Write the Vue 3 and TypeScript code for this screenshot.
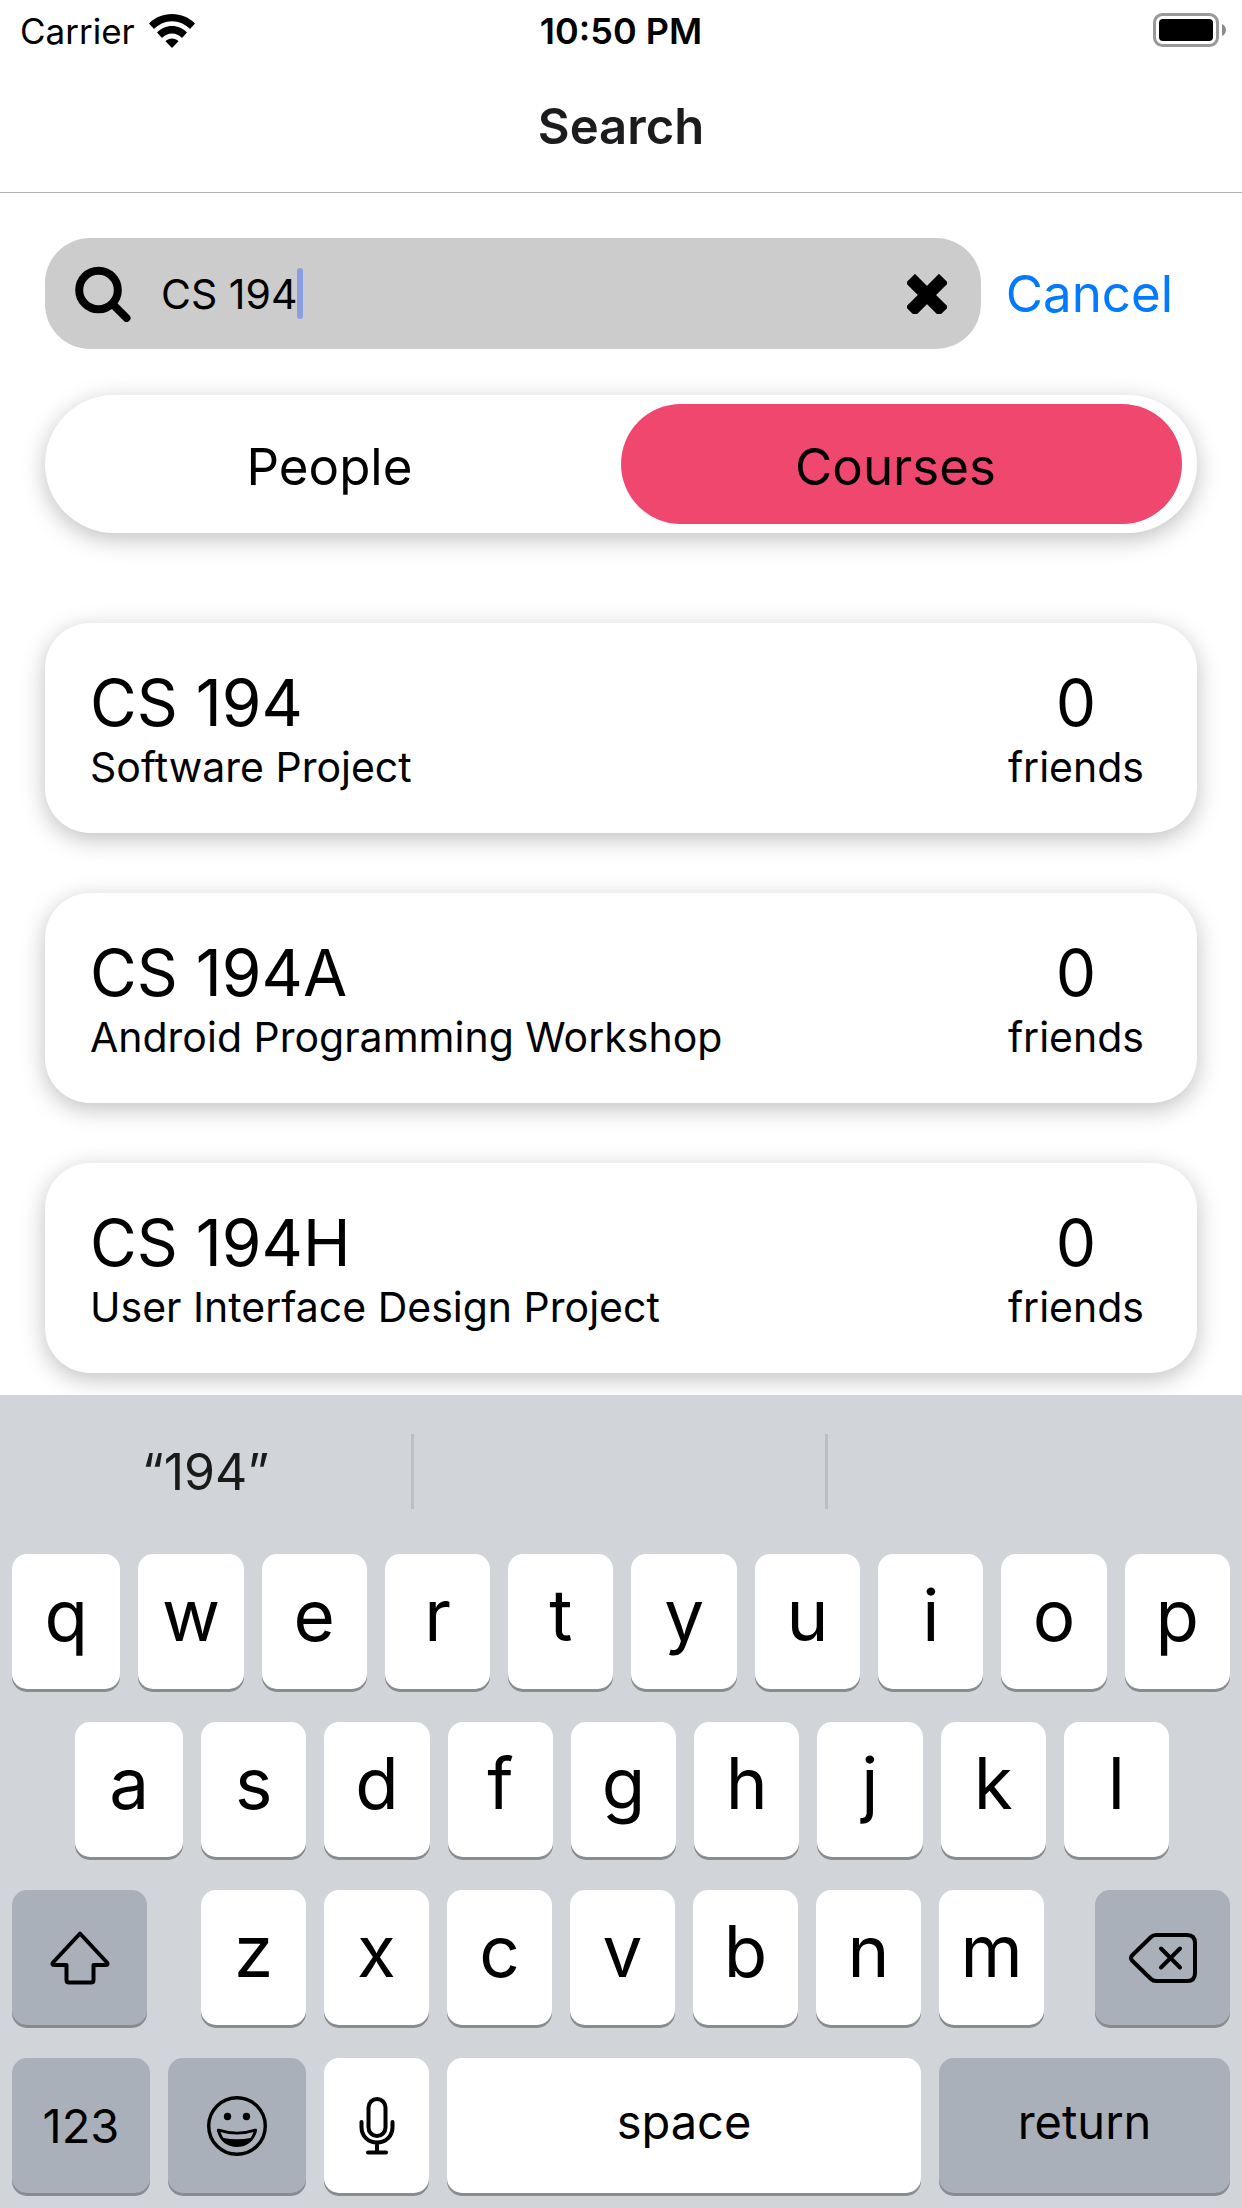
<script setup lang="ts">
import { ref } from 'vue'

interface Course {
  code: string
  name: string
  friends: number
}

const query = ref('CS 194')
const tabs = ['People', 'Courses']
const activeTab = ref('Courses')

const courses: Course[] = [
  { code: 'CS 194', name: 'Software Project', friends: 0 },
  { code: 'CS 194A', name: 'Android Programming Workshop', friends: 0 },
  { code: 'CS 194H', name: 'User Interface Design Project', friends: 0 },
]

const suggestions = ['“194”', '', '']
const topRow = [...'qwertyuiop']
const middleRow = [...'asdfghjkl']
const bottomRow = [...'zxcvbnm']

function type(text: string) {
  query.value += text
}
</script>

<template>
  <div class="screen">
    <div class="status">
      <div class="carrier">
        <span>Carrier</span>
        <svg class="wifi" viewBox="0 0 46 34" aria-hidden="true">
          <path d="M23 0C14 0 6 3.500 0 9.500L5 15C10 10 16 7.200 23 7.200S36 10 41 15L46 9.500C40 3.500 32 0 23 0Z" />
          <path d="M23 12C17 12 12 14.500 8 18.500L13 24C16 21 19 19.500 23 19.500S30 21 33 24L38 18.500C34 14.500 29 12 23 12Z" />
          <path d="M23 24.500C20.500 24.500 18.300 25.500 16.500 27.200L23 34L29.500 27.200C27.700 25.500 25.500 24.500 23 24.500Z" />
        </svg>
      </div>
      <span class="time">10:50 PM</span>
      <svg class="battery" viewBox="0 0 74 34" aria-hidden="true">
        <rect x="1.500" y="1.500" width="63" height="31" rx="8" fill="none" stroke="#999" stroke-width="3" />
        <rect x="6" y="6" width="54" height="22" rx="4" />
        <path d="M69 11C71.500 12 73 14.500 73 17S71.500 22 69 23Z" fill="#8c8c8c" />
      </svg>
    </div>

    <header class="header">
      <h1>Search</h1>
    </header>

    <main class="content">
      <form class="search" @submit.prevent>
        <div class="field">
          <svg class="magnifier" viewBox="0 0 56 56" aria-hidden="true">
            <circle cx="23.500" cy="24" r="19.300" />
            <path d="M38 38.500L51.500 52" />
          </svg>
          <input v-model="query" type="text" aria-label="Search courses" />
          <span class="caret"></span>
          <button class="clear" type="button" aria-label="Clear text" @click="query = ''">
            <svg viewBox="0 0 40 40" aria-hidden="true">
              <path d="M8 9L32 33M32 9L8 33" />
            </svg>
          </button>
        </div>
        <button class="cancel" type="button">Cancel</button>
      </form>

      <div class="tabs">
        <button
          v-for="tab in tabs"
          :key="tab"
          type="button"
          class="tab"
          :class="{ active: tab === activeTab }"
          :aria-pressed="tab === activeTab"
          @click="activeTab = tab"
        >
          {{ tab }}
        </button>
      </div>

      <ul class="courses">
        <li v-for="course in courses" :key="course.code" class="card">
          <div>
            <h2 class="big">{{ course.code }}</h2>
            <p class="small">{{ course.name }}</p>
          </div>
          <div class="friends">
            <p class="big">{{ course.friends }}</p>
            <p class="small">friends</p>
          </div>
        </li>
      </ul>
    </main>

    <section class="keyboard" aria-label="Keyboard">
      <div class="suggestions">
        <button v-for="(word, i) in suggestions" :key="i" type="button" class="suggestion" :aria-label="word || 'No suggestion'">
          {{ word }}
        </button>
      </div>

      <div class="row">
        <button v-for="k in topRow" :key="k" type="button" class="key letter" @click="type(k)">{{ k }}</button>
      </div>
      <div class="row inset">
        <button v-for="k in middleRow" :key="k" type="button" class="key letter" @click="type(k)">{{ k }}</button>
      </div>
      <div class="row spread">
        <button type="button" class="key dark shift" aria-label="Shift">
          <svg class="shift-icon" viewBox="0 0 60 54" aria-hidden="true">
            <path d="M30 2.500L57 31.500Q58.500 34 55.500 34H43.500V49Q43.500 51.500 41 51.500H19Q16.500 51.500 16.500 49V34H4.500Q1.500 34 3 31.500Z" />
          </svg>
        </button>
        <div class="letters">
          <button v-for="k in bottomRow" :key="k" type="button" class="key letter" @click="type(k)">{{ k }}</button>
        </div>
        <button type="button" class="key dark shift" aria-label="Delete" @click="query = query.slice(0, -1)">
          <svg class="delete-icon" viewBox="0 0 68 50" aria-hidden="true">
            <path d="M27 2H58Q66 2 66 10V40Q66 48 58 48H27Q24 48 22 46L3 27.500Q1 25 3 22.500L22 4Q24 2 27 2Z" />
            <path d="M32 15.500L51 34.500M51 15.500L32 34.500" />
          </svg>
        </button>
      </div>
      <div class="row">
        <button type="button" class="key dark mode">123</button>
        <button type="button" class="key dark mode" aria-label="Emoji">
          <svg class="emoji-icon" viewBox="0 0 60 60" aria-hidden="true">
            <circle cx="30" cy="30" r="28.300" fill="none" stroke="#000" stroke-width="3.400" />
            <circle cx="20.500" cy="20.500" r="3.700" />
            <circle cx="39.500" cy="20.500" r="3.700" />
            <path d="M12 32.800Q30 38.500 48 32.800Q50.500 32 50 35C47 46 39 51 30 51S13 46 10 35Q9.500 32 12 32.800Z" />
            <path d="M13.500 36Q30 41 46.500 36Q45.500 39.500 43.500 42Q30 44.500 16.500 42Q14.500 39.500 13.500 36Z" fill="#aab0ba" />
          </svg>
        </button>
        <button type="button" class="key mic" aria-label="Dictate">
          <svg class="mic-icon" viewBox="0 0 36 58" aria-hidden="true">
            <rect x="9.500" y="2" width="17" height="37" rx="8.500" />
            <path d="M2.500 25V30C2.500 39 9 45.500 18 45.500S33.500 39 33.500 30V25M18 45.500V55M9 55.500H27" />
          </svg>
        </button>
        <button type="button" class="key word space" @click="type(' ')">space</button>
        <button type="button" class="key dark word return">return</button>
      </div>
    </section>
  </div>
</template>

<style>
body {
  margin: 0;
  background: #fff;
}
</style>

<style scoped>
.screen {
  display: flex;
  flex-direction: column;
  min-height: 100vh;
  color: #000;
  background: #fff;
  font-family: Inter, 'Liberation Sans', sans-serif;
}

button {
  padding: 0;
  border: 0;
  color: inherit;
  background: none;
  font-family: inherit;
}

svg {
  display: block;
}

h1,
h2,
p {
  margin: 0;
  font-weight: 400;
}

.status {
  display: grid;
  grid-template-columns: 1fr auto 1fr;
  align-items: center;
  height: 60px;
  padding: 0 15px;
  font-size: 35px;
}

.carrier {
  display: flex;
  align-items: center;
  gap: 14px;
  padding: 2px 0 0 5px;
}

.wifi {
  width: 46px;
  height: 34px;
}

.time {
  padding-top: 2px;
  font-weight: 600;
  font-size: 36px;
}

.battery {
  justify-self: end;
  width: 74px;
  height: 34px;
}

.header {
  display: flex;
  align-items: center;
  justify-content: center;
  height: 132px;
  border-bottom: 1px solid #b2b2b2;
}

.header h1 {
  color: #1c1c1e;
  font-size: 49px;
  font-weight: 600;
}

.content {
  padding: 45px 45px 22px;
}

.search {
  display: flex;
  align-items: center;
  gap: 25px;
}

.field {
  display: flex;
  flex: 1;
  align-items: center;
  height: 111px;
  padding: 0 34px 0 30px;
  border-radius: 45px;
  background: #ccc;
}

.magnifier {
  width: 56px;
  height: 56px;
  margin-right: 30px;
  fill: none;
  stroke: #000;
  stroke-width: 8;
  stroke-linecap: round;
}

.field input {
  field-sizing: content;
  min-width: 0;
  padding: 0;
  border: 0;
  outline: 0;
  background: none;
  font-family: inherit;
  font-size: 41px;
}

.caret {
  width: 6px;
  height: 51px;
  border-radius: 3px;
  background: #8a9fe2;
}

.clear {
  margin-left: auto;
}

.clear svg {
  width: 40px;
  height: 40px;
  stroke: #000;
  stroke-width: 13;
  stroke-linecap: square;
  stroke-linejoin: round;
}

.cancel {
  margin-right: 24px;
  color: #007aff;
  font-size: 51px;
}

.tabs {
  display: grid;
  grid-template-columns: 1fr 1fr;
  margin-top: 46px;
  padding: 9px 15px;
  border-radius: 69px;
  background: #fff;
  box-shadow: 0 6px 23px rgb(0 0 0 / 25%);
}

.tab {
  height: 120px;
  padding: 4px 22px 0 0;
  border-radius: 60px;
  font-size: 51px;
}

.tab.active {
  padding-right: 12px;
  background: #f0476f;
}

.courses {
  display: flex;
  flex-direction: column;
  gap: 60px;
  margin: 90px 0 0;
  padding: 0;
  list-style: none;
}

.card {
  display: flex;
  align-items: center;
  justify-content: space-between;
  height: 210px;
  padding: 0 53px 0 45px;
  border-radius: 45px;
  background: #fff;
  box-shadow: 0 6px 23px rgb(0 0 0 / 25%);
  box-sizing: border-box;
}

.big {
  font-size: 64px;
  line-height: 78px;
}

.small {
  font-size: 41px;
  line-height: 50px;
}

.friends {
  text-align: center;
}

.keyboard {
  margin-top: auto;
  padding-bottom: 15px;
  background: #d1d4d9;
}

.suggestions {
  display: grid;
  grid-template-columns: repeat(3, 1fr);
  height: 75px;
  padding: 39px 0 45px;
}

.suggestion {
  color: #1a1a1a;
  font-size: 50px;
}

.suggestion:not(:last-child) {
  border-right: 3px solid #bbbec3;
}

.row {
  display: flex;
  gap: 18px;
  padding: 0 12px;
}

.row + .row {
  margin-top: 33px;
}

.row.inset {
  padding: 0 73px 0 75px;
}

.row.spread {
  gap: 51px;
}

.letters {
  display: flex;
  flex: 1;
  gap: 18px;
  padding-left: 3px;
}

.key {
  display: flex;
  align-items: center;
  justify-content: center;
  height: 135px;
  border-radius: 15px;
  background: #fff;
  box-shadow: 0 3px 0 #898b8f;
  box-sizing: border-box;
  font-size: 47px;
}

.key.dark {
  background: #aab0ba;
}

.letter {
  flex: 1;
  padding-bottom: 14px;
  font-size: 71px;
}

/* The key that opens a full row is slightly wider than the rest. */
.row > .letter:first-child {
  flex-basis: 3px;
}

.word {
  padding-bottom: 8px;
}

.shift {
  width: 135px;
}

.mode {
  width: 138px;
}

.mic {
  width: 105px;
}

.space {
  flex: 1;
}

.return {
  width: 291px;
}

.shift-icon,
.delete-icon,
.mic-icon {
  fill: none;
  stroke: #000;
  stroke-width: 4;
  stroke-linecap: round;
  stroke-linejoin: round;
}

.shift-icon {
  width: 60px;
  height: 54px;
}

.delete-icon {
  width: 68px;
  height: 50px;
}

.emoji-icon {
  width: 60px;
  height: 60px;
}

.mic-icon {
  width: 36px;
  height: 58px;
}
</style>
